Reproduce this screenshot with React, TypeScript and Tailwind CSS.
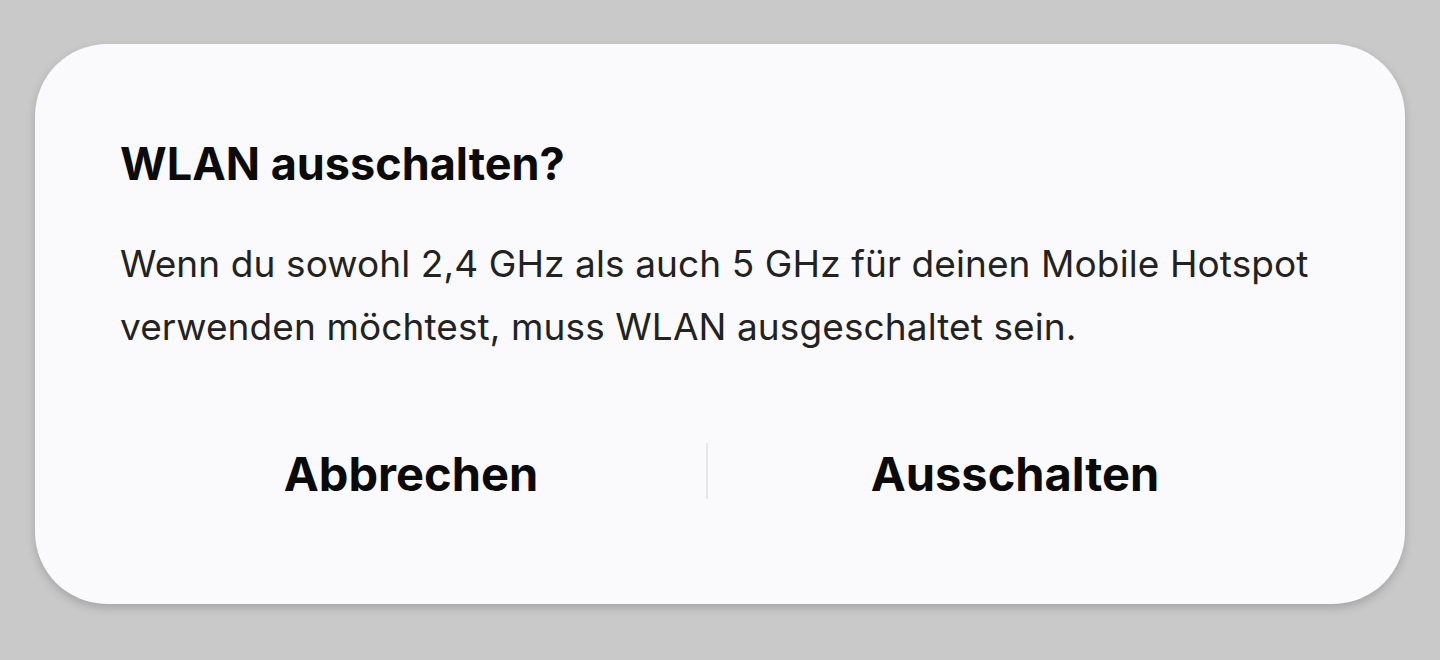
import React from "react";

export default function App() {
  return (
    <div
      className="h-[660px] w-[1440px] bg-[#c9c9c9] pt-[44px] pl-[35px] overflow-hidden"
      style={{ fontFamily: "Inter, 'Noto Sans', sans-serif" }}
    >
      <div className="w-[1370px] h-[560px] rounded-[72px] bg-[#fafafc] shadow-[0_4px_10px_rgba(0,0,0,0.18)] pt-[94px]">
        <div className="px-[85px]">
          <h1 className="text-[45px] leading-[52px] font-bold text-[#0b0b0b]">
            WLAN ausschalten?
          </h1>
          <p className="mt-[42px] text-[37px] leading-[63px] text-[#222222] tracking-[0.1px]">
            Wenn du sowohl 2,4 GHz als auch 5 GHz für deinen Mobile Hotspot
            <br />
            verwenden möchtest, muss WLAN ausgeschaltet sein.
          </p>
        </div>
        <div className="mt-[85px] pl-[81px] grid grid-cols-[590px_2px_614px] items-start">
          <button className="text-[47px] leading-[62px] font-bold text-[#0a0a0a] text-center">
            Abbrechen
          </button>
          <div className="h-[56px] w-[2px] bg-[#e6e6e9]" />
          <button className="text-[47px] leading-[62px] font-bold text-[#0a0a0a] text-center">
            Ausschalten
          </button>
        </div>
      </div>
    </div>
  );
}
